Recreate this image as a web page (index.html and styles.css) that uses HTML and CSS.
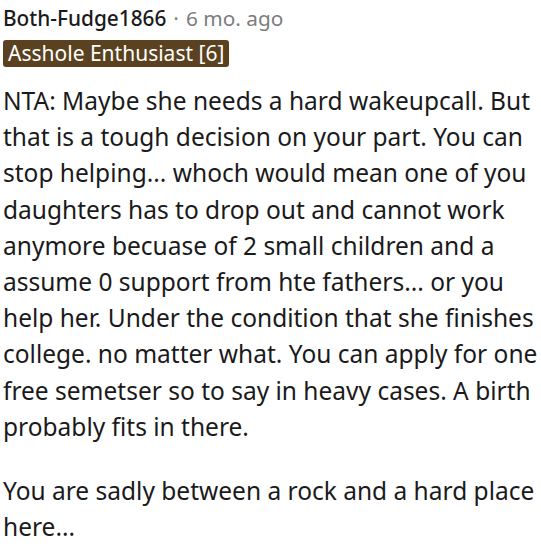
FILE: index.html
```html
<!DOCTYPE html>
<html>
<head>
<meta charset="utf-8">
<link rel="stylesheet" href="styles.css">
</head>
<body>
<div class="comment">
  <div class="meta">
    <span class="author">Both-Fudge1866</span>
    <span class="sep">·</span>
    <span class="time">6 mo. ago</span>
  </div>
  <div class="flair-row"><span class="flair">Asshole Enthusiast [6]</span></div>
  <div class="body">
    <p>NTA: Maybe she needs a hard wakeupcall. But that is a tough decision on your part. You can stop helping... whoch would mean one of you daughters has to drop out and cannot work anymore becuase of 2 small children and a assume 0 support from hte fathers... or you help her. Under the condition that she finishes college. no matter what. You can apply for one free semetser so to say in heavy cases. A birth probably fits in there.</p>
    <p>You are sadly between a rock and a hard place here...</p>
  </div>
</div>
</body>
</html>
```
FILE: styles.css
```css
html, body {
  margin: 0;
  padding: 0;
  background: #ffffff;
}
.comment {
  padding: 3px 3px 0 3px;
  font-family: "Noto Sans", sans-serif;
  color: #1c1c1c;
}
.meta {
  font-size: 20.8px;
  line-height: 30px;
  display: flex;
  align-items: center;
  gap: 7px;
}
.author {
  color: #1a1a1b;
  font-weight: 500;
}
.sep, .time {
  color: #7c7c7c;
}
.flair-row {
  margin-top: 7px;
  display: flex;
}
.flair {
  background: #5a4220;
  color: #ffffff;
  font-size: 21px;
  line-height: 27px;
  padding: 0 5px;
  border-radius: 3px;
}
.body {
  margin-top: 16px;
  font-size: 24.5px;
  line-height: 36.2px;
  color: #1a1a1b;
}
.body p {
  margin: 0 0 28px 0;
}
```
